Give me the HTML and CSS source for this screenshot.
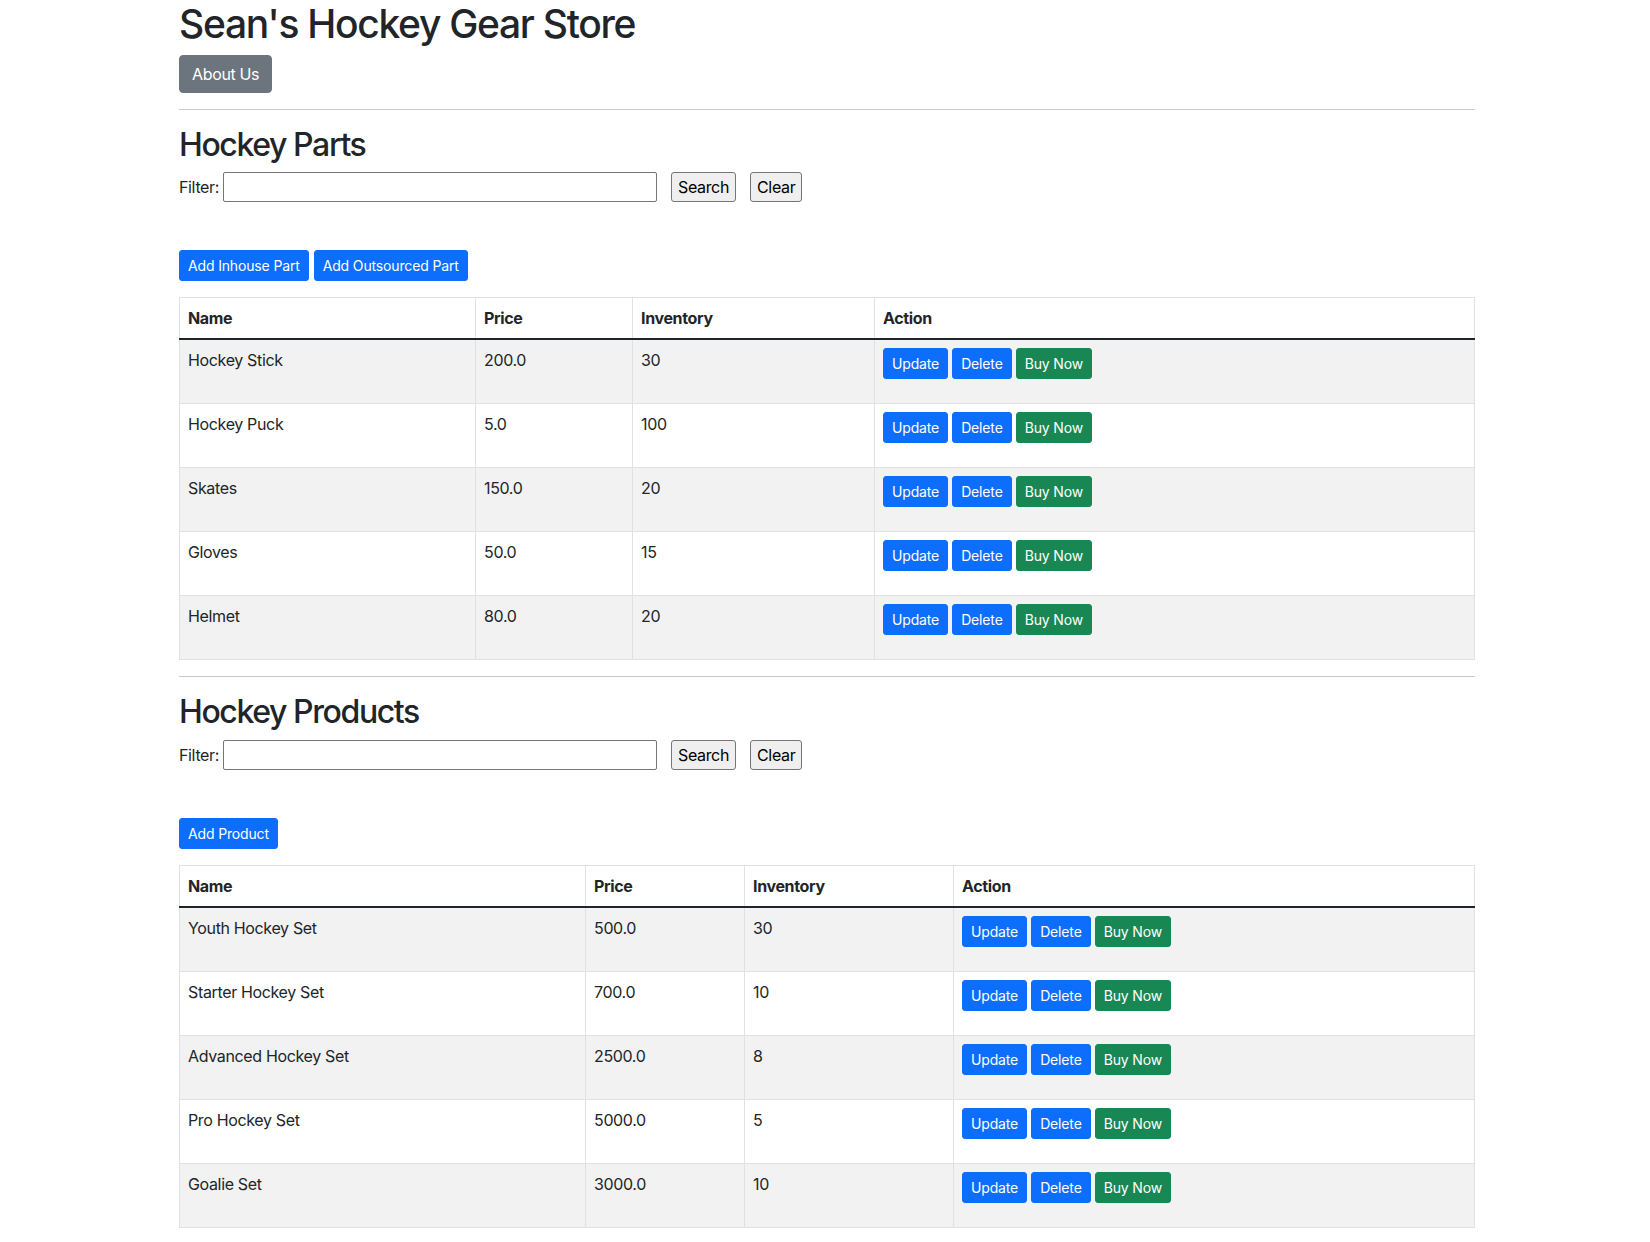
FILE: index.html
```html
<!DOCTYPE html>
<html lang="en">
<head>
<meta charset="utf-8">
<title>Sean's Hockey Gear Store</title>
<link rel="stylesheet" href="styles.css">
</head>
<body>
<div class="container">
  <h1 class="title">Sean's Hockey Gear Store</h1>
  <div class="nav-row"><a class="btn btn-secondary" href="#">About Us</a></div>
  <hr class="rule">

  <h2 class="section-title">Hockey Parts</h2>
  <form class="filter">
    <label class="filter-label">Filter:</label>
    <input class="filter-input" type="text">
    <button class="plain-btn" type="button">Search</button>
    <button class="plain-btn" type="button">Clear</button>
  </form>
  <div class="add-row">
    <a class="btn btn-sm btn-primary" href="#">Add Inhouse Part</a>
    <a class="btn btn-sm btn-primary" href="#">Add Outsourced Part</a>
  </div>
  <table class="table parts">
    <colgroup>
      <col class="c-name"><col class="c-price"><col class="c-inv"><col class="c-act">
    </colgroup>
    <thead>
      <tr><th>Name</th><th>Price</th><th>Inventory</th><th>Action</th></tr>
    </thead>
    <tbody>
      <tr><td>Hockey Stick</td><td>200.0</td><td>30</td><td><div class="actions"><a class="btn btn-sm btn-primary" href="#">Update</a><a class="btn btn-sm btn-primary" href="#">Delete</a><a class="btn btn-sm btn-success" href="#">Buy Now</a></div></td></tr>
      <tr><td>Hockey Puck</td><td>5.0</td><td>100</td><td><div class="actions"><a class="btn btn-sm btn-primary" href="#">Update</a><a class="btn btn-sm btn-primary" href="#">Delete</a><a class="btn btn-sm btn-success" href="#">Buy Now</a></div></td></tr>
      <tr><td>Skates</td><td>150.0</td><td>20</td><td><div class="actions"><a class="btn btn-sm btn-primary" href="#">Update</a><a class="btn btn-sm btn-primary" href="#">Delete</a><a class="btn btn-sm btn-success" href="#">Buy Now</a></div></td></tr>
      <tr><td>Gloves</td><td>50.0</td><td>15</td><td><div class="actions"><a class="btn btn-sm btn-primary" href="#">Update</a><a class="btn btn-sm btn-primary" href="#">Delete</a><a class="btn btn-sm btn-success" href="#">Buy Now</a></div></td></tr>
      <tr><td>Helmet</td><td>80.0</td><td>20</td><td><div class="actions"><a class="btn btn-sm btn-primary" href="#">Update</a><a class="btn btn-sm btn-primary" href="#">Delete</a><a class="btn btn-sm btn-success" href="#">Buy Now</a></div></td></tr>
    </tbody>
  </table>
  <hr class="rule">

  <h2 class="section-title">Hockey Products</h2>
  <form class="filter">
    <label class="filter-label">Filter:</label>
    <input class="filter-input" type="text">
    <button class="plain-btn" type="button">Search</button>
    <button class="plain-btn" type="button">Clear</button>
  </form>
  <div class="add-row">
    <a class="btn btn-sm btn-primary" href="#">Add Product</a>
  </div>
  <table class="table products">
    <colgroup>
      <col class="c-name"><col class="c-price"><col class="c-inv"><col class="c-act">
    </colgroup>
    <thead>
      <tr><th>Name</th><th>Price</th><th>Inventory</th><th>Action</th></tr>
    </thead>
    <tbody>
      <tr><td>Youth Hockey Set</td><td>500.0</td><td>30</td><td><div class="actions"><a class="btn btn-sm btn-primary" href="#">Update</a><a class="btn btn-sm btn-primary" href="#">Delete</a><a class="btn btn-sm btn-success" href="#">Buy Now</a></div></td></tr>
      <tr><td>Starter Hockey Set</td><td>700.0</td><td>10</td><td><div class="actions"><a class="btn btn-sm btn-primary" href="#">Update</a><a class="btn btn-sm btn-primary" href="#">Delete</a><a class="btn btn-sm btn-success" href="#">Buy Now</a></div></td></tr>
      <tr><td>Advanced Hockey Set</td><td>2500.0</td><td>8</td><td><div class="actions"><a class="btn btn-sm btn-primary" href="#">Update</a><a class="btn btn-sm btn-primary" href="#">Delete</a><a class="btn btn-sm btn-success" href="#">Buy Now</a></div></td></tr>
      <tr><td>Pro Hockey Set</td><td>5000.0</td><td>5</td><td><div class="actions"><a class="btn btn-sm btn-primary" href="#">Update</a><a class="btn btn-sm btn-primary" href="#">Delete</a><a class="btn btn-sm btn-success" href="#">Buy Now</a></div></td></tr>
      <tr><td>Goalie Set</td><td>3000.0</td><td>10</td><td><div class="actions"><a class="btn btn-sm btn-primary" href="#">Update</a><a class="btn btn-sm btn-primary" href="#">Delete</a><a class="btn btn-sm btn-success" href="#">Buy Now</a></div></td></tr>
    </tbody>
  </table>
</div>
</body>
</html>
```

FILE: styles.css
```css
* { box-sizing: border-box; }

html, body {
  margin: 0;
  padding: 0;
  background: #fff;
}

body {
  font-family: Inter, "Noto Sans", "Liberation Sans", sans-serif;
  font-size: 16px;
  line-height: 1.5;
  letter-spacing: -0.35px;
  color: #212529;
}

.container {
  width: 100%;
  max-width: 1320px;
  margin: 0 auto;
  padding: 0 10px 0 14px;
}

.title {
  font-size: 39px;
  font-weight: 500;
  line-height: 48px;
  letter-spacing: -1.3px;
  margin: 0 0 7px;
}

.nav-row {
  display: flex;
}

.rule {
  margin: 16px 0;
  border: 0;
  border-top: 1px solid #c8c9ca;
  height: 0;
}

.section-title {
  font-size: 32px;
  font-weight: 500;
  line-height: 1.2;
  letter-spacing: -1.4px;
  margin: 0 0 8px;
}

.filter {
  display: flex;
  align-items: center;
  margin: 0 0 48px;
  height: 30px;
}

.filter-label {
  margin-right: 4px;
}

.filter-input {
  width: 434px;
  height: 30px;
  border: 1px solid #767676;
  border-radius: 2px;
  padding: 1px 2px;
  font: inherit;
  background: #fff;
}

.plain-btn {
  font: inherit;
  letter-spacing: -0.35px;
  line-height: 24px;
  height: 30px;
  margin-left: 14px;
  padding: 2px 6px;
  color: #000;
  background: #efefef;
  border: 1px solid #767676;
  border-radius: 3px;
}

.btn {
  display: inline-block;
  font-size: 16px;
  line-height: 24px;
  padding: 6px 12px;
  border: 1px solid transparent;
  border-radius: 4px;
  color: #fff;
  text-decoration: none;
  font-weight: 400;
  white-space: nowrap;
}

.btn-sm {
  font-size: 14px;
  line-height: 21px;
  letter-spacing: -0.15px;
  padding: 4px 8px;
  border-radius: 3px;
}

.btn-secondary { background: #6c757d; border-color: #6c757d; }
.btn-primary { background: #0d6efd; border-color: #0d6efd; }
.btn-success { background: #198754; border-color: #198754; }

.add-row {
  display: flex;
  gap: 5px;
  margin-bottom: 16px;
}

.table {
  width: 100%;
  border-collapse: collapse;
  table-layout: fixed;
  margin-bottom: 16px;
  color: #212529;
}

.table th,
.table td {
  border: 1px solid #dee2e6;
  padding: 8px;
  text-align: left;
  vertical-align: top;
}

.table th {
  font-weight: 700;
}

.table thead tr th {
  border-bottom: 2px solid #212529;
}

.table tbody tr:nth-child(odd) td {
  background: #f2f2f2;
}

.parts .c-name { width: 296px; }
.parts .c-price { width: 157px; }
.parts .c-inv { width: 242px; }

.products .c-name { width: 406px; }
.products .c-price { width: 159px; }
.products .c-inv { width: 209px; }

.actions {
  display: flex;
  gap: 4px;
  margin-bottom: 16px;
}
```
